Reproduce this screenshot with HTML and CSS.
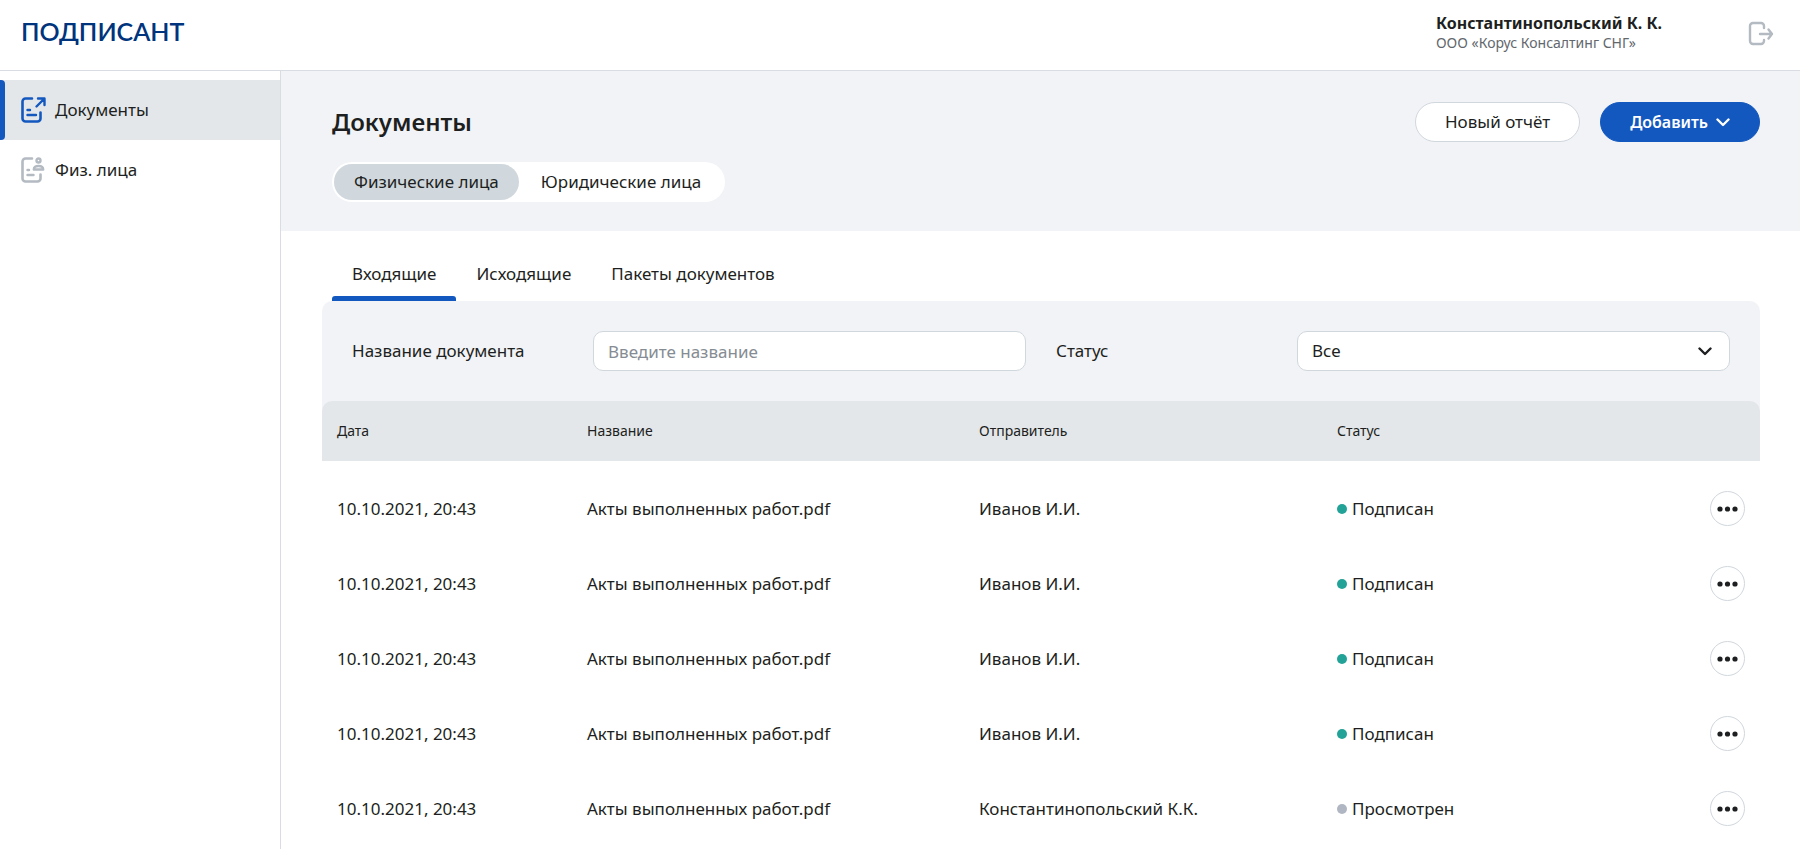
FILE: index.html
```html
<!DOCTYPE html>
<html lang="ru">
<head>
<meta charset="utf-8">
<meta name="viewport" content="width=device-width, initial-scale=1">
<title>Подписант — Документы</title>
<link rel="stylesheet" href="styles.css">
</head>
<body>
<header class="topbar">
  <a class="brand" href="#">ПОДПИСАНТ</a>
  <div class="account">
    <div class="account-text">
      <div class="account-name">Константинопольский К. К.</div>
      <div class="account-org">ООО «Корус Консалтинг СНГ»</div>
    </div>
    <button class="logout" type="button" aria-label="Выйти">
      <svg width="26" height="26" viewBox="0 0 26 26" fill="none" stroke="#b3bac2" stroke-width="2.400" stroke-linecap="round" stroke-linejoin="round"><path d="M16 8V6a3 3 0 0 0-3-3H5a3 3 0 0 0-3 3v15a3 3 0 0 0 3 3h8a3 3 0 0 0 3-3v-1"/><path d="M12 14h12M20.500 9.500l3.500 4.500-3.500 4.500"/></svg>
    </button>
  </div>
</header>
<div class="layout">
  <nav class="sidebar">
    <a class="side-link side-link-active" href="#">
      <svg class="side-icon" width="26" height="28" viewBox="0 0 26 28" fill="none" stroke="#1358bf" stroke-width="2.600" stroke-linecap="round" stroke-linejoin="round"><path d="M12 2.500H5.500a3 3 0 0 0-3 3v17a3 3 0 0 0 3 3h12a3 3 0 0 0 3-3V16.500"/><path d="M7.500 14h2.500M7.500 19h8.500M16.500 10.500l7.500-7.500M18 2.500h6.500V9" stroke-width="2.400"/></svg>
      Документы
    </a>
    <a class="side-link" href="#">
      <svg class="side-icon" width="26" height="28" viewBox="0 0 26 28" fill="none" stroke="#b3bac2" stroke-width="2.600" stroke-linecap="round" stroke-linejoin="round"><path d="M12 2.500H5.500a3 3 0 0 0-3 3v17a3 3 0 0 0 3 3h12a3 3 0 0 0 3-3V18.500"/><path d="M7.500 14h1.500M7.500 19h6" stroke-width="2.400"/><circle cx="18.500" cy="4.500" r="2" stroke-width="2.400"/><path d="M18.500 10c-2.800 0-4.700 1-4.700 3.500h9.400c0-2.500-1.900-3.500-4.700-3.500z" stroke-width="2.400"/></svg>
      Физ. лица
    </a>
  </nav>
  <main class="content">
    <section class="hero">
      <div class="hero-row">
        <h1 class="title">Документы</h1>
        <div class="actions">
          <button class="btn btn-light" type="button">Новый отчёт</button>
          <button class="btn btn-primary" type="button">Добавить
            <svg width="14" height="9" viewBox="0 0 14 9" fill="none" stroke="currentColor" stroke-width="2.400" stroke-linecap="round" stroke-linejoin="round"><path d="M1.500 1.500L7 7l5.500-5.500"/></svg>
          </button>
        </div>
      </div>
      <div class="segment">
        <button class="segment-item segment-item-active" type="button">Физические лица</button>
        <button class="segment-item" type="button">Юридические лица</button>
      </div>
    </section>
    <section class="panel">
      <div class="tabs" role="tablist">
        <button class="tab tab-active" role="tab" aria-selected="true" type="button">Входящие</button>
        <button class="tab" role="tab" aria-selected="false" type="button">Исходящие</button>
        <button class="tab" role="tab" aria-selected="false" type="button">Пакеты документов</button>
      </div>
      <div class="board">
        <form class="filters">
          <div class="field">
            <label for="doc-name">Название документа</label>
            <input class="control" id="doc-name" type="text" placeholder="Введите название">
          </div>
          <div class="field">
            <label for="doc-status">Статус</label>
            <div class="select-wrap">
              <select class="control" id="doc-status"><option>Все</option></select>
              <svg class="select-arrow" width="14" height="9" viewBox="0 0 14 9" fill="none" stroke="#1d1f21" stroke-width="2.400" stroke-linecap="round" stroke-linejoin="round"><path d="M1.500 1.500L7 7l5.500-5.500"/></svg>
            </div>
          </div>
        </form>
        <table class="docs">
          <colgroup><col class="col-date"><col class="col-name"><col class="col-sender"><col class="col-status"><col class="col-menu"></colgroup>
          <thead>
            <tr><th>Дата</th><th>Название</th><th>Отправитель</th><th>Статус</th><th></th></tr>
          </thead>
          <tbody>
            <tr><td>10.10.2021, 20:43</td><td>Акты выполненных работ.pdf</td><td>Иванов И.И.</td><td><span class="status status-signed">Подписан</span></td><td class="menu-cell"><button class="more" type="button" aria-label="Действия"><svg width="21" height="6" viewBox="0 0 21 6" fill="#1d1f21"><circle cx="3" cy="3" r="2.600"/><circle cx="10.500" cy="3" r="2.600"/><circle cx="18" cy="3" r="2.600"/></svg></button></td></tr>
            <tr><td>10.10.2021, 20:43</td><td>Акты выполненных работ.pdf</td><td>Иванов И.И.</td><td><span class="status status-signed">Подписан</span></td><td class="menu-cell"><button class="more" type="button" aria-label="Действия"><svg width="21" height="6" viewBox="0 0 21 6" fill="#1d1f21"><circle cx="3" cy="3" r="2.600"/><circle cx="10.500" cy="3" r="2.600"/><circle cx="18" cy="3" r="2.600"/></svg></button></td></tr>
            <tr><td>10.10.2021, 20:43</td><td>Акты выполненных работ.pdf</td><td>Иванов И.И.</td><td><span class="status status-signed">Подписан</span></td><td class="menu-cell"><button class="more" type="button" aria-label="Действия"><svg width="21" height="6" viewBox="0 0 21 6" fill="#1d1f21"><circle cx="3" cy="3" r="2.600"/><circle cx="10.500" cy="3" r="2.600"/><circle cx="18" cy="3" r="2.600"/></svg></button></td></tr>
            <tr><td>10.10.2021, 20:43</td><td>Акты выполненных работ.pdf</td><td>Иванов И.И.</td><td><span class="status status-signed">Подписан</span></td><td class="menu-cell"><button class="more" type="button" aria-label="Действия"><svg width="21" height="6" viewBox="0 0 21 6" fill="#1d1f21"><circle cx="3" cy="3" r="2.600"/><circle cx="10.500" cy="3" r="2.600"/><circle cx="18" cy="3" r="2.600"/></svg></button></td></tr>
            <tr><td>10.10.2021, 20:43</td><td>Акты выполненных работ.pdf</td><td>Константинопольский К.К.</td><td><span class="status status-viewed">Просмотрен</span></td><td class="menu-cell"><button class="more" type="button" aria-label="Действия"><svg width="21" height="6" viewBox="0 0 21 6" fill="#1d1f21"><circle cx="3" cy="3" r="2.600"/><circle cx="10.500" cy="3" r="2.600"/><circle cx="18" cy="3" r="2.600"/></svg></button></td></tr>
          </tbody>
        </table>
      </div>
    </section>
  </main>
</div>
</body>
</html>
```

FILE: styles.css
```css
* { box-sizing: border-box; }

body {
  margin: 0;
  min-height: 100vh;
  display: flex;
  flex-direction: column;
  background: #fff;
  color: #1d1f21;
  font: 17px/24px "Noto Sans", "Open Sans", sans-serif;
}

button, input, select { font: inherit; color: inherit; }
button { cursor: pointer; }
a { color: inherit; text-decoration: none; }
svg { display: block; flex: none; }

.topbar {
  display: flex;
  justify-content: space-between;
  align-items: center;
  height: 71px;
  padding: 0 26px 4px 21px;
  border-bottom: 1px solid #d9dde3;
}
.brand {
  padding-bottom: 4px;
  color: #00347c;
  font: 600 25px/32px Lato, Inter, sans-serif;
}
.account { display: flex; align-items: center; gap: 86px; }
.account-name { font-size: 16px; font-weight: 700; line-height: 20px; }
.account-org { color: #62676d; font-size: 14px; line-height: 20px; }
.logout { padding: 0; border: 0; background: none; }

.layout { flex: 1; display: flex; align-items: stretch; }
.sidebar {
  flex: none;
  width: 281px;
  padding-top: 9px;
  border-right: 1px solid #d9dde3;
}
.side-link {
  position: relative;
  display: flex;
  align-items: center;
  gap: 9px;
  height: 60px;
  padding-left: 20px;
}
.side-link-active { background: #e4e7ea; }
.side-link-active::before {
  content: "";
  position: absolute;
  left: 0;
  top: 0;
  bottom: 0;
  width: 5px;
  border-radius: 0 4px 4px 0;
  background: #1358bf;
}

.content { flex: 1; min-width: 0; }
.hero { padding: 31px 40px 29px 51px; background: #f2f3f7; }
.hero-row { display: flex; justify-content: space-between; align-items: center; }
.title { margin: 0; font-size: 24px; line-height: 40px; font-weight: 600; }
.actions { display: flex; gap: 20px; }
.btn {
  display: flex;
  align-items: center;
  justify-content: center;
  gap: 8px;
  height: 40px;
  padding: 0 29px;
  border: 1px solid #d0d7dd;
  border-radius: 20px;
  background: #fff;
}
.btn-primary { border-color: #1358bf; background: #1358bf; color: #fff; font-size: 16px; font-weight: 600; }

.segment {
  display: flex;
  width: max-content;
  margin-top: 20px;
  padding: 2px;
  border-radius: 20px;
  background: #fff;
}
.segment-item { height: 36px; padding: 0 22px; border: 0; border-radius: 18px; background: none; }
.segment-item-active { padding: 0 20px; background: #d0d7dd; }

.panel { padding: 20px 40px 0 41px; }
.tabs { display: flex; padding-left: 10px; }
.tab {
  position: relative;
  height: 50px;
  padding: 0 20px 5px;
  border: 0;
  background: none;
}
.tab-active::after {
  content: "";
  position: absolute;
  left: 0;
  right: 0;
  bottom: 0;
  height: 5px;
  border-radius: 3px 3px 0 0;
  background: #1358bf;
}

.board { border-radius: 10px 10px 0 0; background: linear-gradient(#f2f3f7, #f2f3f7) top / 100% 120px no-repeat; }
.filters {
  display: grid;
  grid-template-columns: 1fr 1fr;
  gap: 30px;
  padding: 30px;
}
.field { display: grid; grid-template-columns: 241px 1fr; align-items: center; }
.control {
  width: 100%;
  height: 40px;
  padding: 0 14px;
  border: 1px solid #d0d7dd;
  border-radius: 10px;
  background: #fff;
  appearance: none;
}
.control::placeholder { color: #868c93; opacity: 1; }
.select-wrap { position: relative; }
.select-arrow { position: absolute; right: 18px; top: 16px; pointer-events: none; }

.docs { width: 100%; table-layout: fixed; border-collapse: separate; border-spacing: 0; }
.col-date { width: 250px; }
.col-name { width: 392px; }
.col-sender { width: 358px; }
.col-menu { width: 80px; }
.docs th {
  height: 60px;
  padding: 0 15px;
  background: #e4e7ea;
  font-size: 14px;
  font-weight: 400;
  text-align: left;
}
.docs th:first-child { border-top-left-radius: 10px; }
.docs th:last-child { border-top-right-radius: 10px; }
.docs tbody::before { content: ""; display: block; height: 10px; }
.docs td { height: 75px; padding: 0 15px; }
.status { display: flex; align-items: center; gap: 5px; }
.status::before { content: ""; width: 10px; height: 10px; border-radius: 50%; background: #b0b7c3; }
.status-signed::before { background: #23a297; }
.more {
  display: flex;
  align-items: center;
  justify-content: center;
  width: 35px;
  height: 35px;
  margin-left: auto;
  padding: 0;
  border: 1px solid #d0d7dd;
  border-radius: 50%;
  background: #fff;
}
```
